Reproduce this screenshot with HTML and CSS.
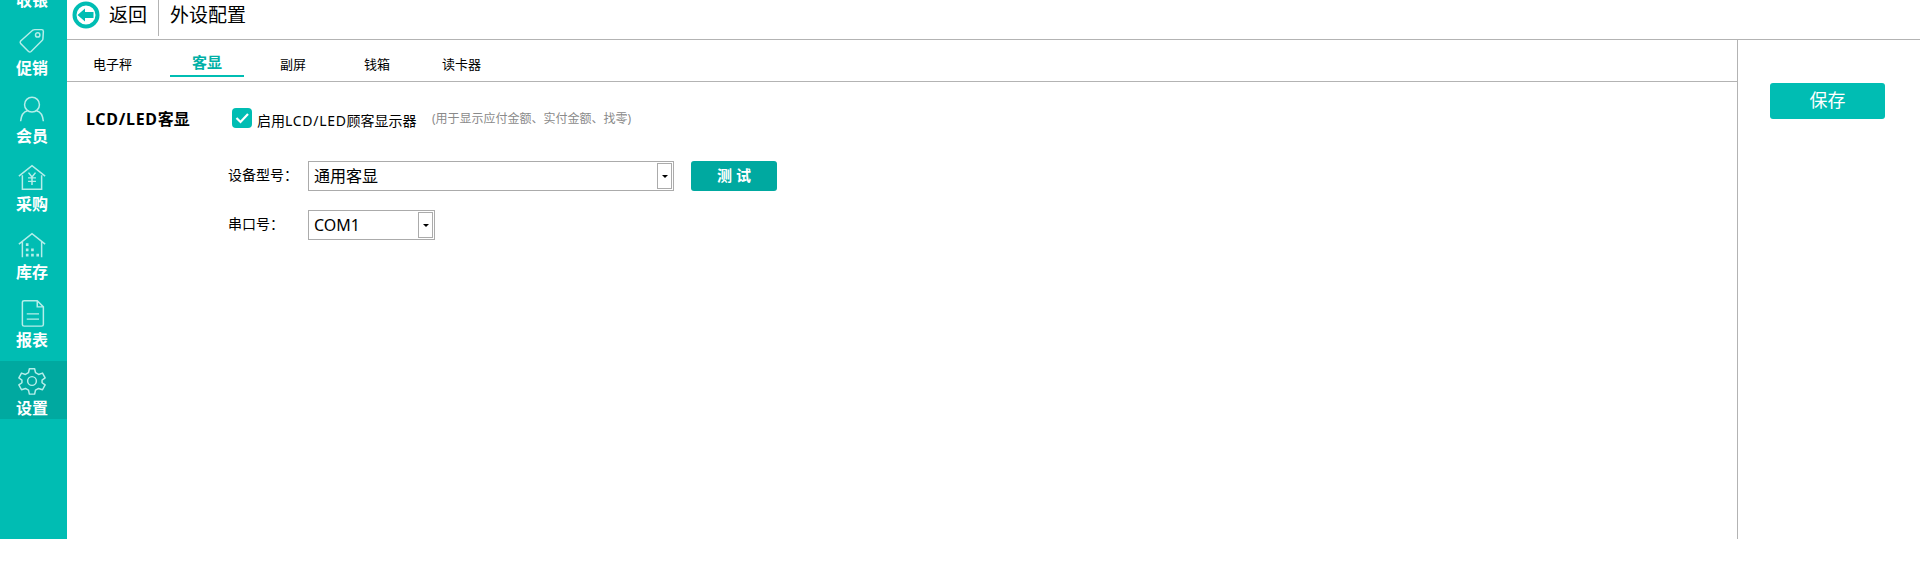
FILE: index.html
```html
<!DOCTYPE html>
<html>
	<head>
		<meta charset="UTF-8">
		<title>外设配置</title>
		<link rel="stylesheet" href="styles.css">
	</head>
	<body>
		<div class="app">
			<div class="nav">
				<div class="nav-item">
					<svg class="nav-icon" viewBox="0 0 32 32"></svg>
					<span>收银</span>
				</div>
				<div class="nav-item">
					<svg class="nav-icon" viewBox="0 0 32 32"><path d="M3 16 L17 3.5 Q18 3 19 3 L27 3 Q29 3 29 5 L28.5 13 Q28.5 14.5 27.500 15.500 L15 28 Q13.500 29 12 28 L3 19 Q2 17.500 3 16 Z"/><circle cx="22.500" cy="9" r="2.500"/></svg>
					<span>促销</span>
				</div>
				<div class="nav-item">
					<svg class="nav-icon" viewBox="0 0 32 32"><circle cx="16" cy="11" r="8.500"/><path d="M3 30 Q4 19.500 11 18 M29 30 Q28 19.500 21 18"/></svg>
					<span>会员</span>
				</div>
				<div class="nav-item">
					<svg class="nav-icon" viewBox="0 0 32 32"><path d="M1 15 L16 3 L31 15 M5 14 L5 30 L27 30 L27 14"/><path d="M12 11 L16 16 L20 11 M16 16 L16 25 M11.500 17 L20.500 17 M11.500 21 L20.500 21"/></svg>
					<span>采购</span>
				</div>
				<div class="nav-item">
					<svg class="nav-icon" viewBox="0 0 32 32"><path d="M1 15 L16 3 L31 15 M5 12 L5 30 M27 12 L27 30"/><path class="dots" d="M9 14h3v3h-3z M9 20h3v3h-3z M15 20h3v3h-3z M9 26h3v3h-3z M15 26h3v3h-3z M21 26h3v3h-3z"/></svg>
					<span>库存</span>
				</div>
				<div class="nav-item">
					<svg class="nav-icon" viewBox="0 0 32 32"><path d="M5 4 Q5 2 7 2 L22 2 L29 9 L29 29 Q29 31 27 31 L7 31 Q5 31 5 29 Z M22 2 L22 9 L29 9"/><path d="M10 17 L24 17 M10 23 L24 23"/></svg>
					<span>报表</span>
				</div>
				<div class="nav-item active">
					<svg class="nav-icon" viewBox="0 0 32 32"><circle cx="16" cy="16" r="5"/><path d="M13 2 L19 2 L20 6.500 L23.500 8.500 L28 7 L31 12.500 L27.500 15 L27.500 18 L31 20.500 L28 26 L23.500 24.500 L20 26.500 L19 31 L13 31 L12 26.500 L8.500 24.500 L4 26 L1 20.500 L4.500 18 L4.500 15 L1 12.500 L4 7 L8.500 8.500 L12 6.500 Z" stroke-linejoin="round"/></svg>
					<span>设置</span>
				</div>
			</div>
			<div class="main">
				<div class="topbar">
					<svg class="back-icon" viewBox="0 0 28 28"><circle cx="14" cy="14" r="11.500"/><path class="arrow" d="M5.500 14 L13 7.500 L13 11 L21.500 11 L21.500 17 L13 17 L13 20.500 Z"/></svg>
					<span class="back-text">返回</span>
					<span class="page-title">外设配置</span>
				</div>
				<div class="body">
					<div class="content">
						<div class="tabs">
							<div class="tab tab-first">电子秤</div>
							<div class="tab on">客显</div>
							<div class="tab">副屏</div>
							<div class="tab">钱箱</div>
							<div class="tab tab-last">读卡器</div>
						</div>
						<div class="form">
							<div class="enable-row">
								<div class="form-title"><span class="latin">LCD/LED</span>客显</div>
								<div class="check">
									<svg viewBox="0 0 20 20"><path d="M4.500 10 L8.500 14 L16 6"/></svg>
								</div>
								<div class="check-text">启用<span class="latin">LCD/LED</span>顾客显示器</div>
								<div class="hint">(用于显示应付金额、实付金额、找零)</div>
							</div>
							<div class="field">
								<div class="field-label">设备型号：</div>
								<div class="select select-long">
									<span>通用客显</span>
									<i class="select-btn"></i>
								</div>
								<div class="btn-test">测 试</div>
							</div>
							<div class="field field2">
								<div class="field-label">串口号：</div>
								<div class="select select-short">
									<span>COM1</span>
									<i class="select-btn"></i>
								</div>
							</div>
						</div>
					</div>
					<div class="side">
						<div class="btn-save">保存</div>
					</div>
				</div>
			</div>
		</div>
	</body>
</html>
```

FILE: styles.css
```css
* { box-sizing: border-box; }
html, body { margin: 0; padding: 0; background: #fff; }
body { font-family: "Noto Sans", "Noto Sans CJK SC", sans-serif; color: #000; overflow: hidden; }

.app { display: flex; height: 539px; }

/* left menu, scrolled a little so the first item is cut */
.nav { width: 67px; flex: none; background: #00bdb3; overflow: hidden; }
.nav-item { height: 58px; margin-bottom: 10px; padding-right: 3px; display: flex; flex-direction: column; align-items: center; color: #fff; font-size: 16px; font-weight: bold; line-height: 20px; }
.nav-item:first-child { margin-top: -47px; }
.nav-item.active { background: #00a9a0; }
.nav-icon { width: 28px; height: 28px; margin-top: 6px; margin-bottom: 3px; fill: none; stroke: #b5eeea; stroke-width: 1.7; }
.nav-icon .dots { fill: #b5eeea; stroke: none; }

.main { flex: 1; display: flex; flex-direction: column; min-width: 0; }

.topbar { height: 40px; flex: none; border-bottom: 1px solid #b3b3b3; display: flex; align-items: flex-start; padding-left: 5px; }
.back-icon { width: 28px; height: 28px; margin-top: 1px; }
.back-icon circle { fill: none; stroke: #00bdb3; stroke-width: 4; }
.back-icon .arrow { fill: #00bdb3; }
.back-text { font-size: 19px; line-height: 30px; margin-left: 9px; width: 50px; height: 36px; border-right: 1px solid #b3b3b3; }
.page-title { font-size: 19px; line-height: 30px; margin-left: 11px; }

.body { flex: 1; display: flex; min-height: 0; }
.content { flex: 1; min-width: 0; }
.side { width: 183px; flex: none; border-left: 1px solid #b3b3b3; padding: 43px 0 0 32px; }

.tabs { height: 42px; border-bottom: 1px solid #b3b3b3; display: flex; padding-left: 4px; }
.tab { height: 38px; padding: 0 22px; margin-right: 14px; font-size: 13px; line-height: 49px; white-space: nowrap; }
.tab-first { margin-right: 16px; }
.tab.on { color: #00b0a6; font-size: 15px; font-weight: bold; line-height: 44px; border-bottom: 2px solid #00bdb3; height: 37px; }
.tab:nth-child(4) { margin-right: 8px; }

.form { padding-left: 19px; }
.enable-row { display: flex; align-items: flex-start; padding-top: 26px; height: 79px; }
.form-title { width: 146px; font-size: 16px; font-weight: bold; line-height: 22px; }
.latin { letter-spacing: .7px; }
.check { width: 20px; height: 20px; background: #00bdb3; border-radius: 4px; }
.check svg { display: block; fill: none; stroke: #fff; stroke-width: 2.2; }
.check-text { font-size: 14px; line-height: 20px; margin-left: 5px; margin-top: 3px; width: 160px; white-space: nowrap; }
.hint { font-size: 12px; line-height: 20px; color: #8a8a8a; margin-left: 15px; margin-top: 1px; white-space: nowrap; }

.field { display: flex; align-items: center; padding-left: 142px; height: 30px; }
.field2 { margin-top: 19px; }
.field-label { width: 80px; font-size: 14px; line-height: 26px; margin-top: -3px; }

.select { height: 30px; border: 1px solid #ababab; padding: 1px; display: flex; align-items: stretch; justify-content: space-between; font-size: 16px; line-height: 26px; }
.select span { padding-left: 4px; }
.select-long { width: 366px; }
.select-short { width: 127px; }
.select-btn { width: 15px; border: 1px solid #ababab; display: flex; align-items: center; justify-content: center; }
.select-btn:before { content: ""; border-top: 3px solid #000; border-left: 3px solid transparent; border-right: 3px solid transparent; }

.btn-test { width: 86px; height: 30px; margin-left: 17px; background: #00a9a0; border-radius: 3px; color: #fff; font-size: 15px; font-weight: bold; line-height: 28px; text-align: center; }

.btn-save { width: 115px; height: 36px; background: #00bdb3; border-radius: 3px; color: #fff; font-size: 18px; line-height: 34px; text-align: center; }
```
